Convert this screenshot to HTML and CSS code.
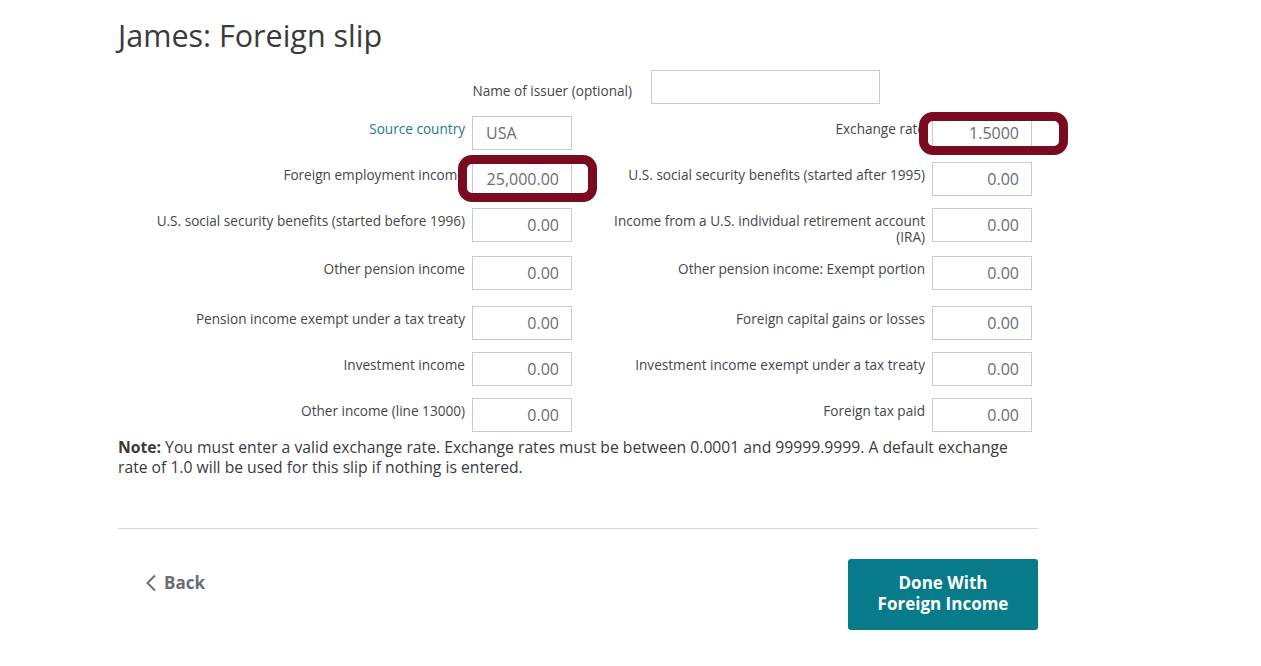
FILE: index.html
```html
<!DOCTYPE html>
<html>
<head>
<meta charset="utf-8">
<link rel="stylesheet" href="styles.css">
</head>
<body>
<div class="page">
  <h1 class="title"><span class="who">James:</span> Foreign slip</h1>

  <div class="issuer-row">
    <label class="issuer-label">Name of issuer (optional)</label>
    <div class="field field-wide"></div>
  </div>

  <div class="form">
    <div class="grid">
      <div class="label link">Source country</div>
      <div class="field left">USA</div>
      <div class="label right-label">Exchange rate</div>
      <div class="field">1.5000</div>

      <div class="label">Foreign employment income</div>
      <div class="field">25,000.00</div>
      <div class="label right-label">U.S. social security benefits (started after 1995)</div>
      <div class="field">0.00</div>

      <div class="label">U.S. social security benefits (started before 1996)</div>
      <div class="field">0.00</div>
      <div class="label right-label two-line">Income from a U.S. individual retirement account (IRA)</div>
      <div class="field">0.00</div>

      <div class="label tall">Other pension income</div>
      <div class="field">0.00</div>
      <div class="label right-label tall">Other pension income: Exempt portion</div>
      <div class="field">0.00</div>

      <div class="label">Pension income exempt under a tax treaty</div>
      <div class="field">0.00</div>
      <div class="label right-label">Foreign capital gains or losses</div>
      <div class="field">0.00</div>

      <div class="label">Investment income</div>
      <div class="field">0.00</div>
      <div class="label right-label">Investment income exempt under a tax treaty</div>
      <div class="field">0.00</div>

      <div class="label">Other income (line 13000)</div>
      <div class="field">0.00</div>
      <div class="label right-label">Foreign tax paid</div>
      <div class="field">0.00</div>
    </div>
    <div class="mark mark-rate"></div>
    <div class="mark mark-income"></div>
  </div>

  <p class="note"><b>Note:</b> You must enter a valid exchange rate. Exchange rates must be between 0.0001 and 99999.9999. A default exchange<br>rate of 1.0 will be used for this slip if nothing is entered.</p>

  <hr class="divider">

  <div class="actions">
    <a class="back">
      <svg width="12" height="18" viewBox="0 0 12 18"><path d="M10 1.5 L2.5 9 L10 16.5" fill="none" stroke="#6b6c72" stroke-width="2"/></svg>
      <span>Back</span>
    </a>
    <button class="done">Done With<br>Foreign Income</button>
  </div>
</div>
</body>
</html>
```

FILE: styles.css
```css
html, body {
  margin: 0;
  padding: 0;
  background: #fff;
}
body {
  font-family: "Open Sans", Lato, sans-serif;
  color: #393a3d;
}
.page {
  width: 920px;
  padding-left: 118px;
}
.title {
  margin: 0;
  padding-top: 15px;
  font-size: 30.5px;
  line-height: 40px;
  font-weight: 400;
  color: #393a3d;
  height: 55px;
}
.who {
  font-weight: 400;
}
.issuer-row {
  display: grid;
  grid-template-columns: 514px 229px;
  column-gap: 19px;
  align-items: start;
  height: 34px;
}
.issuer-label {
  font-size: 13.6px;
  line-height: 18px;
  padding-top: 12px;
  text-align: right;
  color: #45464b;
}
.field {
  box-sizing: border-box;
  width: 100px;
  height: 34px;
  border: 1px solid #c8cacd;
  background: #fff;
  font-size: 16px;
  line-height: 32px;
  color: #6b6c72;
  text-align: right;
  padding: 0 12px 0 13px;
}
.field.left {
  text-align: left;
}
.field-wide {
  width: 229px;
}
.form {
  position: relative;
  margin-top: 12px;
}
.grid {
  display: grid;
  grid-template-columns: 347px 100px 346px 100px;
  column-gap: 7px;
  row-gap: 12px;
  align-items: start;
}
.label {
  font-size: 13.6px;
  line-height: 16px;
  padding-top: 5px;
  text-align: right;
  color: #45464b;
}
.label.two-line {
  margin-bottom: -1px;
}
.label.tall {
  padding-bottom: 17px;
}
.right-label {
  padding-left: 28px;
}
.link {
  color: #1a7b88;
}
.mark {
  position: absolute;
  box-sizing: border-box;
  border: 9px solid #7a0a20;
  border-radius: 14px;
}
.mark-rate {
  left: 801px;
  top: -4px;
  width: 149px;
  height: 43px;
}
.mark-income {
  left: 340px;
  top: 39px;
  width: 139px;
  height: 47px;
}
.note {
  margin: 5px 0 0;
  font-size: 15.7px;
  line-height: 20px;
  color: #393a3d;
}
.note b {
  font-weight: 700;
}
.divider {
  margin: 51px 0 0;
  border: 0;
  border-top: 1px solid #d4d7dc;
  height: 0;
}
.actions {
  display: flex;
  justify-content: space-between;
  align-items: flex-start;
  margin-top: 30px;
}
.back {
  display: flex;
  align-items: center;
  gap: 7px;
  margin-left: 27px;
  margin-top: 12px;
  font-size: 17px;
  font-weight: 700;
  color: #6b6c72;
}
.done {
  width: 190px;
  height: 71px;
  border: 0;
  border-radius: 3px;
  background: #087b8b;
  color: #fff;
  font-family: "Open Sans", Lato, sans-serif;
  font-size: 17px;
  font-weight: 700;
  line-height: 21px;
  padding: 0 0 3px;
}
```
